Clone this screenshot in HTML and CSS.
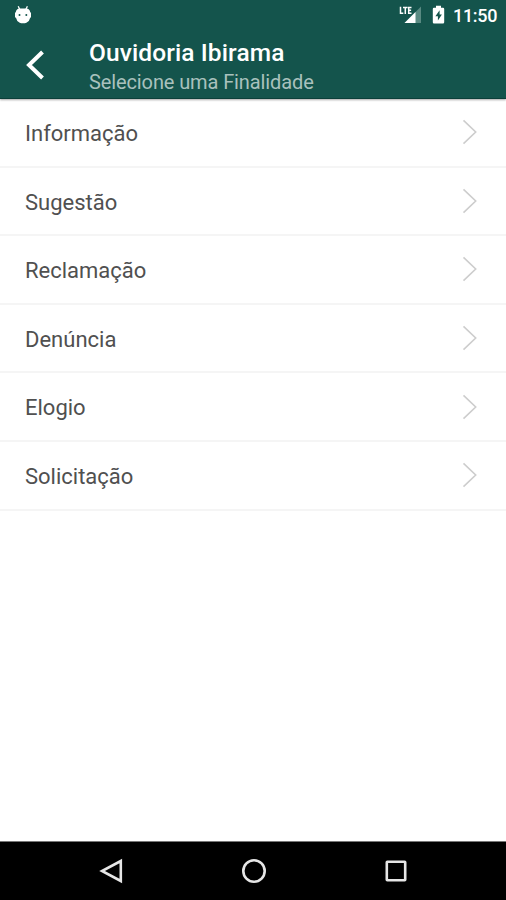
FILE: index.html
```html
<!DOCTYPE html>
<html lang="pt-BR">
<head>
<meta charset="utf-8">
<title>Ouvidoria Ibirama</title>
<link rel="stylesheet" href="styles.css">
</head>
<body>
<div class="screen">
  <header class="top">
    <div class="status">
      <svg class="droid" width="18" height="20" viewBox="0 0 18 20"><path d="M4.2 1.2 5.8 4.5M13.400 1.200 11.800 4.500" stroke="#fff" stroke-width="1.300"/><path d="M1.800 7Q2.500 3.700 5.500 3.500h7q3 .2 3.700 3.500l.8 1v4l-1 1.200q-.6 3.400-3.600 4.500l-1.500.5H7.200l-1.500-.5q-3-1.100-3.500-4.500L1 12V8z" fill="#fff"/><circle cx="5.500" cy="10" r="1" fill="#14544c"/><circle cx="12.300" cy="10" r="1" fill="#14544c"/></svg>
      <svg class="signal" width="24" height="20" viewBox="0 0 24 20"><path d="M22 1.500V18H5.500z" fill="#598a82"/><path d="M16.500 7v11H5.500z" fill="#fff"/><path d="M1.500 1.800v6.500h2.800M4 2.400h4.600M6.300 2.400v6.500M12.500 2.400H9.700v5.900h2.800M9.700 5.300h2.400" fill="none" stroke="#14544c" stroke-width="3"/><path d="M1.500 1.800v6.500h2.800M4 2.400h4.600M6.300 2.400v6.500M12.500 2.400H9.700v5.900h2.800M9.700 5.300h2.400" fill="none" stroke="#fff" stroke-width="1.500"/></svg>
      <svg class="battery" width="13" height="20" viewBox="0 0 13 20"><path d="M4 .8h5v2h2q1.200 0 1.200 1.200v13.300q0 1.200-1.200 1.200H2q-1.200 0-1.200-1.200V4Q.8 2.800 2 2.800h2z" fill="#fff"/><path d="M7.600 5.300 3.400 11.300h2.500v4.200l4-6H7.600z" fill="#14544c"/></svg>
      <span class="clock">11:50</span>
    </div>
    <div class="bar">
      <svg class="back" width="22" height="32" viewBox="0 0 22 32"><path d="M18.500 3 5 16l13.500 13" fill="none" stroke="#fff" stroke-width="4"/></svg>
      <div class="titles">
        <h1 class="title">Ouvidoria Ibirama</h1>
        <p class="subtitle">Selecione uma Finalidade</p>
      </div>
    </div>
  </header>
  <ul class="list">
    <li class="row"><span class="label">Informação</span><svg class="chevron" width="16" height="26" viewBox="0 0 16 26"><path d="m1.500 1.300 12.200 11.700L1.500 24.700"/></svg></li>
    <li class="row"><span class="label">Sugestão</span><svg class="chevron" width="16" height="26" viewBox="0 0 16 26"><path d="m1.500 1.300 12.200 11.700L1.500 24.700"/></svg></li>
    <li class="row"><span class="label">Reclamação</span><svg class="chevron" width="16" height="26" viewBox="0 0 16 26"><path d="m1.500 1.300 12.200 11.700L1.500 24.700"/></svg></li>
    <li class="row"><span class="label">Denúncia</span><svg class="chevron" width="16" height="26" viewBox="0 0 16 26"><path d="m1.500 1.300 12.200 11.700L1.500 24.700"/></svg></li>
    <li class="row"><span class="label">Elogio</span><svg class="chevron" width="16" height="26" viewBox="0 0 16 26"><path d="m1.500 1.300 12.200 11.700L1.500 24.700"/></svg></li>
    <li class="row"><span class="label">Solicitação</span><svg class="chevron" width="16" height="26" viewBox="0 0 16 26"><path d="m1.500 1.300 12.200 11.700L1.500 24.700"/></svg></li>
  </ul>
  <nav class="nav">
    <svg width="26" height="26" viewBox="0 0 26 26"><path d="M21.800 3v20L3 13z"/></svg>
    <svg width="26" height="26" viewBox="0 0 26 26"><circle cx="13" cy="13" r="10.700"/></svg>
    <svg width="26" height="26" viewBox="0 0 26 26"><rect x="3.800" y="3.800" width="18.400" height="18.400" rx=".5"/></svg>
  </nav>
</div>
</body>
</html>
```
FILE: styles.css
```css
* { box-sizing: border-box; margin: 0; padding: 0; }
body { background: #fff; font-family: Roboto, "Liberation Sans", sans-serif; }
svg { display: block; flex: none; }
.screen { width: 506px; height: 900px; display: flex; flex-direction: column; overflow: hidden; }
.top { height: 99px; flex: none; background: #14544c; color: #fff; border-bottom: 1px solid #0b3f39; box-shadow: 0 1px 2px rgba(0, 0, 0, .35); }
.status { height: 32px; display: flex; align-items: center; padding: 0 9px 0 14px; }
.droid { margin-top: -3px; }
.signal { margin-left: auto; }
.signal, .battery { margin-top: -2px; }
.battery { margin-right: 8px; margin-left: 9px; }
.clock { width: 44px; margin-top: -1px; font-size: 18px; letter-spacing: -.3px; font-weight: 500; white-space: nowrap; }
.bar { height: 66px; display: flex; padding-left: 24px; }
.back { margin-top: 17px; }
.titles { margin-left: 43px; padding-top: 6px; }
.title { font-size: 24.500px; line-height: 29px; letter-spacing: .1px; font-weight: 500; white-space: nowrap; }
.subtitle { padding-top: 1px; font-size: 20px; line-height: 29px; letter-spacing: -.11px; color: #a9c1bd; white-space: nowrap; }
.list { list-style: none; flex: 1; }
.row { height: 68.600px; display: flex; align-items: center; justify-content: space-between; padding: 0 28px 0 25px; border-bottom: 2px solid #f5f5f5; font-size: 22px; color: #505050; }
.label { padding-top: 2.600px; }
.chevron { fill: none; stroke: #cdcdcd; stroke-width: 1.600; }
.nav { height: 59px; flex: none; display: flex; align-items: center; justify-content: space-between; padding: 0 97px 0 99px; background: #000; border-top: 1px solid #777; }
.nav svg { fill: none; stroke: #e6e6e6; stroke-width: 2.600; }
```
